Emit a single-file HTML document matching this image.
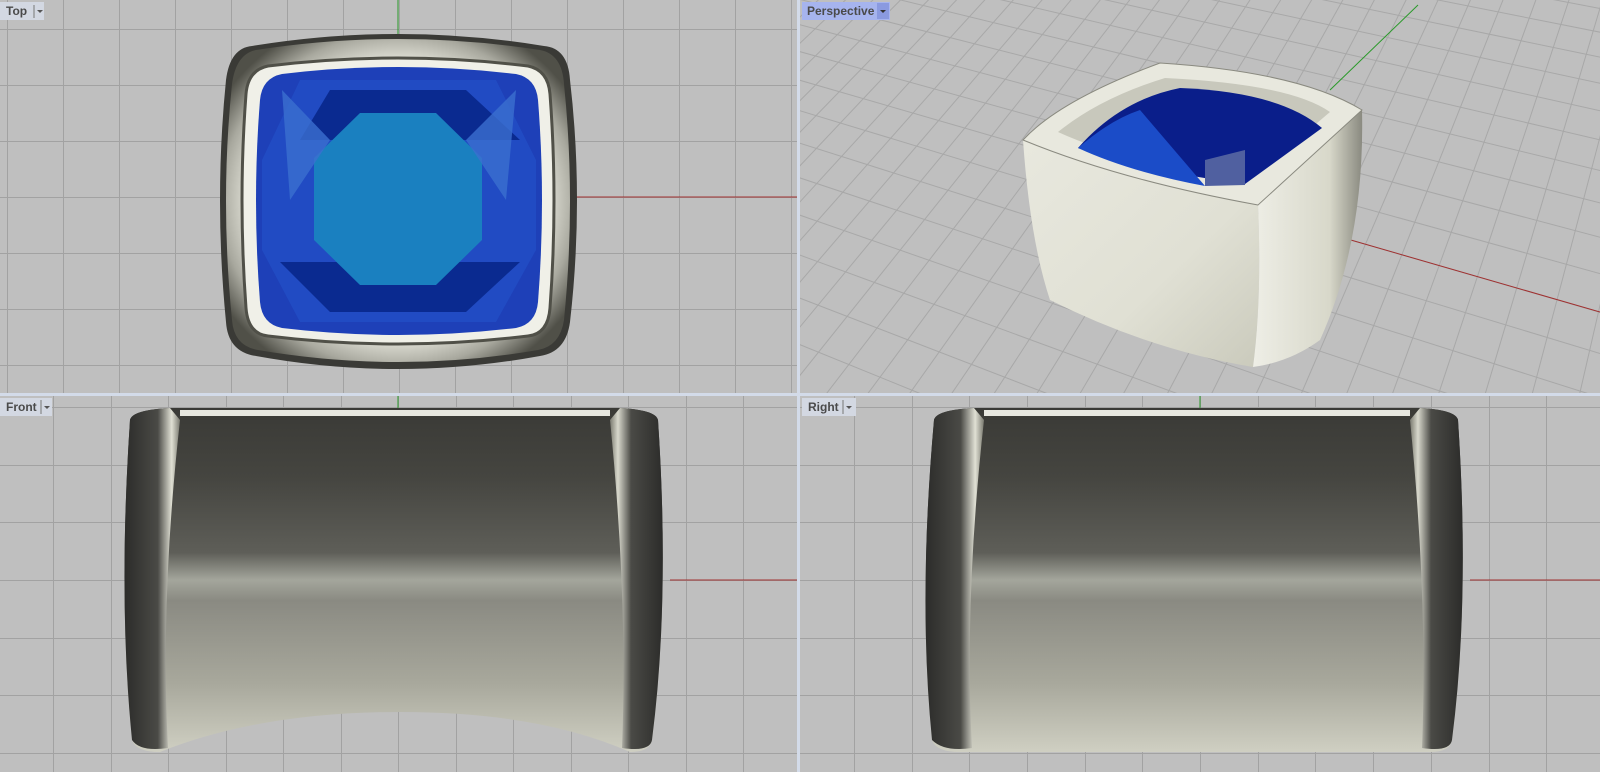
<!DOCTYPE html>
<html><head><meta charset="utf-8"><style>
html,body{margin:0;padding:0;width:1600px;height:772px;overflow:hidden;background:#d3dbe9}
svg{display:block;overflow:hidden}
text{font-family:"Liberation Sans",sans-serif;font-size:12px;font-weight:bold;fill:#4a4a4a}
</style></head><body>
<svg id="s" width="1600" height="772" xmlns="http://www.w3.org/2000/svg">
<defs>
<linearGradient id="fr" x1="0" y1="0" x2="0" y2="1">
<stop offset="0" stop-color="#3a3a36"/><stop offset="0.2" stop-color="#454540"/><stop offset="0.42" stop-color="#5e5e58"/><stop offset="0.5" stop-color="#a4a69c"/><stop offset="0.56" stop-color="#8a8a82"/><stop offset="0.8" stop-color="#a8a89c"/><stop offset="1" stop-color="#cfcfc2"/>
</linearGradient>
<linearGradient id="side" x1="0" y1="0" x2="1" y2="0">
<stop offset="0" stop-color="#2c2c2a"/><stop offset="0.6" stop-color="#4a4a46"/><stop offset="0.85" stop-color="#e0e0d4"/><stop offset="1" stop-color="#7a7a70"/>
</linearGradient>
<linearGradient id="sideR" x1="1" y1="0" x2="0" y2="0">
<stop offset="0" stop-color="#2c2c2a"/><stop offset="0.6" stop-color="#4a4a46"/><stop offset="0.85" stop-color="#d8d8cc"/><stop offset="1" stop-color="#7a7a70"/>
</linearGradient>
<radialGradient id="sil" cx="0.5" cy="0.5" r="0.6">
<stop offset="0.72" stop-color="#e0e0d6"/><stop offset="0.86" stop-color="#a8a89e"/><stop offset="1" stop-color="#505048"/>
</radialGradient>
<linearGradient id="pf" x1="0" y1="0" x2="1" y2="1">
<stop offset="0" stop-color="#e8e8de"/><stop offset="0.6" stop-color="#e0e0d4"/><stop offset="1" stop-color="#cacabc"/>
</linearGradient>
<linearGradient id="ps" x1="0" y1="0" x2="1" y2="0">
<stop offset="0" stop-color="#eeeee6"/><stop offset="0.7" stop-color="#d8d8ca"/><stop offset="1" stop-color="#8a8a80"/>
</linearGradient>
<clipPath id="pc"><rect x="800" y="0" width="800" height="393"/></clipPath>
</defs>
<rect x="0" y="0" width="797" height="393" fill="#bfbfbf"/>
<rect x="800" y="0" width="800" height="393" fill="#bfbfbf"/>
<rect x="0" y="396" width="797" height="376" fill="#bfbfbf"/>
<rect x="800" y="396" width="800" height="376" fill="#bfbfbf"/>
<g id="grids" stroke="#a2a2a2" stroke-width="1"></g>
<g id="pg" stroke="#a8a8a8" stroke-width="1" clip-path="url(#pc)"></g>
<line x1="398" y1="0" x2="398" y2="40" stroke="#2a9a2a"/>
<line x1="560" y1="197" x2="797" y2="197" stroke="#a03030"/>
<line x1="398" y1="396" x2="398" y2="415" stroke="#2a9a2a"/>
<line x1="670" y1="580" x2="797" y2="580" stroke="#a03030"/>
<line x1="1200" y1="396" x2="1200" y2="415" stroke="#2a9a2a"/>
<line x1="1470" y1="580" x2="1600" y2="580" stroke="#a03030"/>
<line x1="1330" y1="90" x2="1418" y2="5" stroke="#2a9a2a"/>
<line x1="1330" y1="234" x2="1600" y2="312" stroke="#a03030"/>

<!-- TOP view ring -->
<path d="M252,46 Q398,22 544,46 Q568,48 570,80 Q584,200 570,322 Q566,352 540,356 Q398,382 256,356 Q228,352 226,322 Q214,200 226,80 Q230,48 252,46Z" fill="#3a3a36"/>
<path d="M256,50 Q398,28 540,50 Q562,54 564,84 Q576,200 564,320 Q560,346 538,350 Q398,374 258,350 Q234,346 232,320 Q220,200 232,84 Q236,54 256,50Z" fill="url(#sil)"/>
<path d="M268,66 Q398,50 528,66 Q548,70 550,94 Q558,200 550,308 Q548,334 528,336 Q398,352 268,336 Q248,334 246,308 Q238,200 246,94 Q248,70 268,66Z" fill="#f0f0e8" stroke="#505048" stroke-width="3"/>
<path d="M282,74 Q398,60 516,74 Q536,78 538,100 Q546,200 538,302 Q536,324 516,328 Q398,342 282,328 Q262,324 260,302 Q252,200 260,100 Q262,78 282,74Z" fill="#1e40b8"/>
<path d="M300,80 L496,80 L536,160 L536,250 L496,322 L300,322 L262,250 L262,160Z" fill="#2250c8" opacity="0.7"/>
<path d="M330,90 L466,90 L520,140 L300,140Z" fill="#0a2a90"/>
<path d="M330,312 L466,312 L520,262 L280,262Z" fill="#0a2a90"/>
<path d="M360,113 L436,113 L482,158 L482,240 L436,285 L360,285 L314,240 L314,158Z" fill="#1a80c0"/>
<path d="M282,90 L330,140 L290,200Z M516,90 L466,140 L506,200Z" fill="#3b6fd0" opacity="0.8"/>

<!-- PERSPECTIVE ring -->
<path d="M1050,300 Q1030,240 1023,140 L1258,205 Q1262,300 1253,367 Q1150,350 1050,300Z" fill="url(#pf)"/>
<path d="M1258,205 L1362,110 Q1365,240 1320,340 Q1290,362 1253,367 Q1262,300 1258,205Z" fill="url(#ps)"/>
<path d="M1023,140 Q1060,100 1160,63 Q1300,72 1362,110 L1258,205 Q1120,180 1023,140Z" fill="#e8e8de" stroke="#8a8a80" stroke-width="1"/>
<path d="M1058,132 Q1100,98 1165,78 Q1290,84 1330,112 L1250,180 Q1130,165 1058,132Z" fill="#c8c8bc"/>
<path d="M1078,148 Q1120,100 1180,88 Q1280,92 1322,128 L1245,184 Q1140,170 1078,148Z" fill="#0a1e8a"/>
<path d="M1078,148 Q1110,120 1140,110 L1205,186 Q1130,172 1078,148Z" fill="#1b4cc8"/>
<path d="M1205,160 L1245,150 L1245,185 L1205,186Z" fill="#5060a0"/>

<!-- FRONT ring -->
<path d="M130,420 Q132,410 170,408 L620,408 Q656,410 658,420 Q670,600 652,740 Q650,752 630,752 Q540,712 400,712 Q260,712 160,752 Q136,752 132,740 Q118,600 130,420Z" fill="url(#fr)"/>
<path d="M130,420 Q132,410 170,408 L180,420 Q160,600 168,748 Q140,752 132,740 Q118,600 130,420Z" fill="url(#side)"/>
<path d="M658,420 Q656,410 620,408 L610,420 Q628,600 622,748 Q650,752 652,740 Q670,600 658,420Z" fill="url(#sideR)"/>
<rect x="180" y="410" width="430" height="6" fill="#e8e8e0"/>
<!-- RIGHT ring -->
<path d="M934,420 Q936,410 974,408 L1420,408 Q1456,410 1458,420 Q1470,600 1452,740 Q1450,752 1430,752 L960,752 Q936,752 932,740 Q918,600 934,420Z" fill="url(#fr)"/>
<path d="M934,420 Q936,410 974,408 L984,420 Q964,600 972,748 Q944,752 932,740 Q918,600 934,420Z" fill="url(#side)"/>
<path d="M1458,420 Q1456,410 1420,408 L1410,420 Q1428,600 1422,748 Q1450,752 1452,740 Q1470,600 1458,420Z" fill="url(#sideR)"/>
<rect x="984" y="410" width="426" height="6" fill="#e8e8e0"/>

<rect x="0" y="2" width="44" height="18" fill="#d3d8e2"/><text x="6" y="15">Top</text><line x1="34" y1="5" x2="34" y2="18" stroke="#777"/><path d="M37,10 h6 l-3,3z" fill="#555"/>
<rect x="802" y="2" width="88" height="18" fill="#a6b4ee"/><text x="807" y="15" fill="#222">Perspective</text><rect x="877" y="3" width="12" height="16" fill="#8a9ae0"/><path d="M880,10 h6 l-3,3z" fill="#333"/>
<rect x="0" y="398" width="52" height="18" fill="#d3d8e2"/><text x="6" y="411">Front</text><line x1="41" y1="400" x2="41" y2="414" stroke="#777"/><path d="M44,406 h6 l-3,3z" fill="#555"/>
<rect x="802" y="398" width="54" height="18" fill="#d3d8e2"/><text x="808" y="411">Right</text><line x1="843" y1="400" x2="843" y2="414" stroke="#777"/><path d="M846,406 h6 l-3,3z" fill="#555"/>
</svg>
<script>
var NS="http://www.w3.org/2000/svg";
function L(g,x1,y1,x2,y2){var l=document.createElementNS(NS,"line");l.setAttribute("x1",x1);l.setAttribute("y1",y1);l.setAttribute("x2",x2);l.setAttribute("y2",y2);g.appendChild(l);}
var g=document.getElementById("grids");
for(var x=7;x<797;x+=56)L(g,x+.5,0,x+.5,393);
for(var y=29;y<393;y+=56)L(g,0,y+.5,797,y+.5);
for(var x=398-7*57.5;x<797;x+=57.5)if(x>0)L(g,Math.round(x)+.5,396,Math.round(x)+.5,772);
for(var y=580-3*57.7;y<772;y+=57.7)if(y>396)L(g,0,Math.round(y)+.5,797,Math.round(y)+.5);
for(var x=1200-7*57.7;x<1600;x+=57.7)if(x>800)L(g,Math.round(x)+.5,396,Math.round(x)+.5,772);
for(var y=580-3*57.7;y<772;y+=57.7)if(y>396)L(g,800,Math.round(y)+.5,1600,Math.round(y)+.5);
var O=[1330,234],Vu=[-1470,-578],Vv=[1900,-1000],k1=-0.0125,k2=0.026;
function H(u,v){var w=k1*u+k2*v+1;return[(Vu[0]*k1*u+Vv[0]*k2*v+O[0])/w,(Vu[1]*k1*u+Vv[1]*k2*v+O[1])/w];}
var pg=document.getElementById("pg");
for(var u=-100;u<=50;u++){var vmin=(0.06-1-k1*u)/k2;var v0=Math.max(-50,vmin),v1=110;if(v1<=v0)continue;var a=H(u,v0),c=H(u,v1);L(pg,a[0],a[1],c[0],c[1]);}
for(var v=-50;v<=110;v++){var umax=(0.06-1-k2*v)/k1;var u0=-100,u1=Math.min(50,umax);if(u1<=u0)continue;var a=H(u0,v),c=H(u1,v);L(pg,a[0],a[1],c[0],c[1]);}
</script>
</body></html>
